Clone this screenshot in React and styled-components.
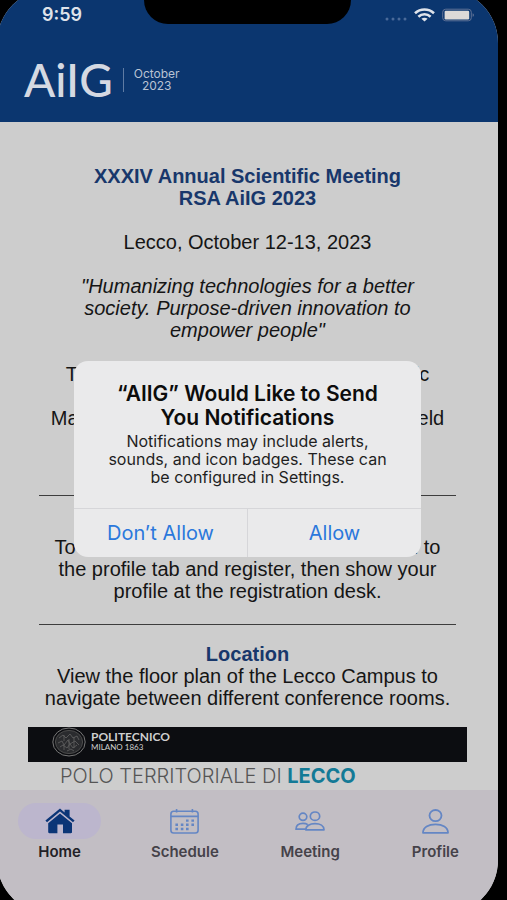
import React from 'react';
import styled, { createGlobalStyle } from 'styled-components';

const GlobalStyle = createGlobalStyle`
  * {
    box-sizing: border-box;
  }
  body {
    margin: 0;
    background-color: #000;
    font-family: "Liberation Sans", Arial, sans-serif;
  }
`;
const Device = styled.div`
  min-height: 100vh;
  overflow: hidden;
`;
/* the rounded display runs a little past the window on three sides */
const Screen = styled.div`
  position: relative;
  display: flex;
  flex-direction: column;
  min-height: calc(100vh + 25px);
  margin: -11px 9px -14px -3px;
  border-radius: 54px;
  overflow: hidden;
  background-color: #cdcdcd;
`;
const Header = styled.header`
  height: 133px;
  padding-top: 11px;
  background-color: #0b366f;
`;
const StatusBar = styled.div`
  display: grid;
  grid-template-columns: 1fr 207px 1fr;
  height: 30px;
  color: #dfe3ea;
`;
const Time = styled.span`
  padding-left: 45px;
  font: 600 18px/30px Inter, sans-serif;
`;
const Notch = styled.div`
  height: 24px;
  background-color: #000;
  border-radius: 0 0 24px 24px;
`;
const StatusIcons = styled.div`
  display: flex;
  justify-content: flex-end;
  align-items: center;
  gap: 7px;
  padding-right: 23px;
`;
const Brand = styled.div`
  display: flex;
  align-items: center;
  gap: 10px;
  height: 62px;
  padding: 8px 0 0 27px;
  margin-top: 15px;
  color: #d5d9e2;
`;
const BrandName = styled.span`
  font: 500 46px/48px Lato, sans-serif;
`;
const BrandDate = styled.span`
  padding-left: 10px;
  border-left: 1px solid #5f7ba3;
  font: 400 12px/12px Inter, sans-serif;
  text-align: center;
  color: #b9c3d4;
`;
const Content = styled.main`
  flex: 1;
  padding: 43px 31px 0;
  font-size: 20px;
  line-height: 22px;
  text-align: center;
  color: #151515;
`;
const Title = styled.h1`
  margin: 0;
  font-size: 20px;
  font-weight: 700;
  color: #18376b;
`;
const SubTitle = styled(Title).attrs({ as: 'h2' })``;
const Text = styled.p`
  margin: ${props => props.$spaced ? '22px 0 0' : '0'};
  font-style: ${props => props.$italic ? 'italic' : 'normal'};
`;
const Rule = styled.hr`
  height: 1px;
  margin: 22px 11px 18px;
  border: 0;
  background-color: #3d3d3d;
`;
const Intro = styled.section`
  padding-bottom: 44px;
`;
const Campus = styled.section`
  margin-top: 18px;
`;
const CampusBar = styled.div`
  display: flex;
  align-items: flex-start;
  gap: 5px;
  height: 35px;
  padding-left: 24px;
  background-color: #0c0d11;
`;
const School = styled.div`
  padding-top: 4px;
  font: 700 12px/12px Lato, sans-serif;
  text-align: left;
  color: #cfcfcf;
`;
const SchoolCity = styled.div`
  font-size: 8px;
  line-height: 9px;
  font-weight: 400;
`;
const CampusName = styled.div`
  padding-left: 32px;
  font: 300 20px/28px Inter, sans-serif;
  text-align: left;
  white-space: nowrap;
  color: #555;
  strong {
    font-weight: 700;
    color: #137a96;
  }
`;
const TabBar = styled.nav`
  display: flex;
  height: 124px;
  padding-top: 13px;
  background-color: #c2bec4;
`;
const Tab = styled.button`
  flex: 1;
  display: flex;
  flex-direction: column;
  align-items: center;
  gap: 3px;
  padding: 0;
  border: 0;
  background: none;
  font: 600 15px/20px Inter, sans-serif;
  color: ${props => props.$active ? '#222126' : '#454249'};
`;
const TabIcon = styled.span`
  display: flex;
  align-items: center;
  justify-content: center;
  width: 83px;
  height: 36px;
  border-radius: 18px;
  background-color: ${props => props.$active ? '#bcb6cd' : 'transparent'};
  color: ${props => props.$active ? '#0b3577' : '#6486c4'};
`;
const Overlay = styled.div`
  position: absolute;
  inset: 0;
  display: flex;
  align-items: center;
  justify-content: center;
  padding-top: 14px;
`;
const Dialog = styled.div`
  width: 75%;
  max-width: 347px;
  border-radius: 14px;
  overflow: hidden;
  background-color: #eaeaeb;
  font-family: Inter, sans-serif;
  text-align: center;
`;
const DialogBody = styled.div`
  padding: 21px 16px 22px;
`;
const DialogTitle = styled.h2`
  margin: 0 0 2px;
  font-size: 21px;
  line-height: 24px;
  font-weight: 600;
  color: #0c0c0c;
`;
const DialogText = styled.p`
  margin: 0;
  font-size: 16px;
  line-height: 18px;
  color: #1f1f1f;
`;
const DialogActions = styled.div`
  display: flex;
  border-top: 1px solid #d6d6d9;
`;
const DialogButton = styled.button`
  flex: 1;
  height: 48px;
  padding: 0;
  border: 0;
  background: none;
  font: 400 20px/24px Inter, sans-serif;
  color: #2b78dc;
  & + & {
    border-left: 1px solid #d6d6d9;
  }
`;

const SignalDots = () => (
  <svg width="22" height="14" viewBox="0 0 22 14" fill="#4a6a99">
    <circle cx="2" cy="11" r="1.5" />
    <circle cx="8" cy="11" r="1.5" />
    <circle cx="14" cy="11" r="1.5" />
    <circle cx="20" cy="11" r="1.5" />
  </svg>
);

const WifiIcon = () => (
  <svg width="21" height="14" viewBox="0 0 21 14" fill="none" stroke="currentColor" strokeWidth="2.6">
    <path d="M1 5.2C6.4 0.2 14.6 0.2 20 5.2" />
    <path d="M4.4 8.7C7.9 5.5 13.1 5.5 16.6 8.7" />
    <path d="M10.5 13.6L7.4 10.7C9.2 9.3 11.8 9.3 13.6 10.7Z" fill="currentColor" stroke="none" />
  </svg>
);

const BatteryIcon = () => (
  <svg width="33" height="14" viewBox="0 0 33 14">
    <rect x="0.7" y="1.2" width="28.6" height="11.6" rx="3" fill="none" stroke="#5f7296" strokeWidth="1" />
    <rect x="2.6" y="2.8" width="24.6" height="8.6" rx="1.2" fill="#dcdad8" />
    <path d="M30.6 5.2C32.4 5.6 32.4 8.4 30.6 8.8Z" fill="#5f7296" />
  </svg>
);

const Seal = () => (
  <svg width="34" height="31" viewBox="0 0 34 31" fill="none" stroke="#777" strokeWidth="1">
    <ellipse cx="17" cy="15" rx="16.2" ry="14" />
    <ellipse cx="17" cy="15" rx="13.6" ry="11.6" stroke="#4c4c4c" fill="#2a2b2e" />
    <path d="M7 11l4-3 3 3 4-4 3 4 4-2 2 4M6 16l4-2 2 4 4-5 2 4 5-3 4 4M8 20l3-2 4 3 3-4 3 4 4-3M12 8v6M17 12v10M22 10v11M12 18v5M15 24l4-2 3 2" stroke="#636363" strokeWidth="0.8" />
  </svg>
);

const HomeIcon = () => (
  <svg width="30" height="26" viewBox="0 0 30 26" fill="currentColor">
    <path d="M0.4 12.6L15 0.6L19.6 4.4V1.8H24.6V8.5L29.6 12.6L28 14.2L15 3.6L2 14.2Z" />
    <path d="M15 5.4L27 15.2V24C27 24.8 26.6 25.2 25.8 25.2H18V16.4H12.4V25.2H4.4C3.6 25.2 3.2 24.8 3.2 24V15.2Z" />
  </svg>
);

const CalendarIcon = () => (
  <svg width="29" height="25" viewBox="0 0 29 25" fill="none" stroke="currentColor" strokeWidth="1.6">
    <rect x="0.9" y="2.2" width="27.2" height="21.8" rx="2.8" />
    <path d="M0.8 7.4H28.2M6.6 0V3.6M22.4 0V3.6" />
    <path d="M16 11.6h2.6M21.4 11.6h2.6M5.4 15.8h2.6M10.8 15.8h2.6M16 15.8h2.6M21.4 15.8h2.6M5.4 20h2.6M10.8 20h2.6M16 20h2.6" strokeWidth="2.4" />
  </svg>
);

const PeopleIcon = () => (
  <svg width="30" height="20" viewBox="0 0 30 20" fill="none" stroke="currentColor" strokeWidth="1.7">
    <ellipse cx="8" cy="5.8" rx="3.8" ry="3.6" />
    <ellipse cx="20" cy="5.2" rx="4.7" ry="4.2" />
    <path d="M10.8 18.8C10.8 14.8 14.8 12.6 20 12.6S29 14.8 29 18.8Z" strokeLinejoin="round" />
    <path d="M10.6 18.2H1C1 14.4 3.8 12.4 8 12.4C10 12.4 11.6 12.8 12.8 13.6" strokeLinejoin="round" />
  </svg>
);

const PersonIcon = () => (
  <svg width="27" height="25" viewBox="0 0 27 25" fill="none" stroke="currentColor" strokeWidth="1.8">
    <ellipse cx="13.5" cy="6.6" rx="6" ry="5.6" />
    <path d="M1 23.8C1 18.4 6.4 15.4 13.5 15.4S26 18.4 26 23.8Z" strokeLinejoin="round" />
  </svg>
);

const tabs = [
  { label: 'Home', Icon: HomeIcon, active: true },
  { label: 'Schedule', Icon: CalendarIcon },
  { label: 'Meeting', Icon: PeopleIcon },
  { label: 'Profile', Icon: PersonIcon }
];

const App = () => {
  return (
    <Device>
      <GlobalStyle />
      <Screen>
        <Header>
          <StatusBar>
            <Time>9:59</Time>
            <Notch />
            <StatusIcons>
              <SignalDots />
              <WifiIcon />
              <BatteryIcon />
            </StatusIcons>
          </StatusBar>
          <Brand>
            <BrandName>AiIG</BrandName>
            <BrandDate>October<br />2023</BrandDate>
          </Brand>
        </Header>

        <Content>
          <Intro>
            <Title>XXXIV Annual Scientific Meeting<br />RSA AiIG 2023</Title>
            <Text $spaced>Lecco, October 12-13, 2023</Text>
            <Text $spaced $italic>
              "Humanizing technologies for a better<br />
              society. Purpose-driven innovation to<br />
              empower people"
            </Text>
            <Text $spaced>The 34th Annual Meeting of the Scientific</Text>
            <Text $spaced>Management community working in this field</Text>
          </Intro>
          <Rule />
          <section>
            <SubTitle>Registration</SubTitle>
            <Text>
              To check in at the conference desk, head to<br />
              the profile tab and register, then show your<br />
              profile at the registration desk.
            </Text>
          </section>
          <Rule />
          <section>
            <SubTitle>Location</SubTitle>
            <Text>
              View the floor plan of the Lecco Campus to<br />
              navigate between different conference rooms.
            </Text>
          </section>
          <Campus>
            <CampusBar>
              <Seal />
              <School>
                POLITECNICO
                <SchoolCity>MILANO 1863</SchoolCity>
              </School>
            </CampusBar>
            <CampusName>POLO TERRITORIALE DI <strong>LECCO</strong></CampusName>
          </Campus>
        </Content>

        <TabBar>
          {tabs.map(({ label, Icon, active }) => (
            <Tab key={label} type="button" $active={active}>
              <TabIcon $active={active}><Icon /></TabIcon>
              {label}
            </Tab>
          ))}
        </TabBar>

        <Overlay>
          <Dialog role="alertdialog" aria-labelledby="alert-title" aria-describedby="alert-text">
            <DialogBody>
              <DialogTitle id="alert-title">“AIIG” Would Like to Send<br />You Notifications</DialogTitle>
              <DialogText id="alert-text">
                Notifications may include alerts,<br />
                sounds, and icon badges. These can<br />
                be configured in Settings.
              </DialogText>
            </DialogBody>
            <DialogActions>
              <DialogButton type="button">Don’t Allow</DialogButton>
              <DialogButton type="button">Allow</DialogButton>
            </DialogActions>
          </Dialog>
        </Overlay>
      </Screen>
    </Device>
  )
}

export default App;
